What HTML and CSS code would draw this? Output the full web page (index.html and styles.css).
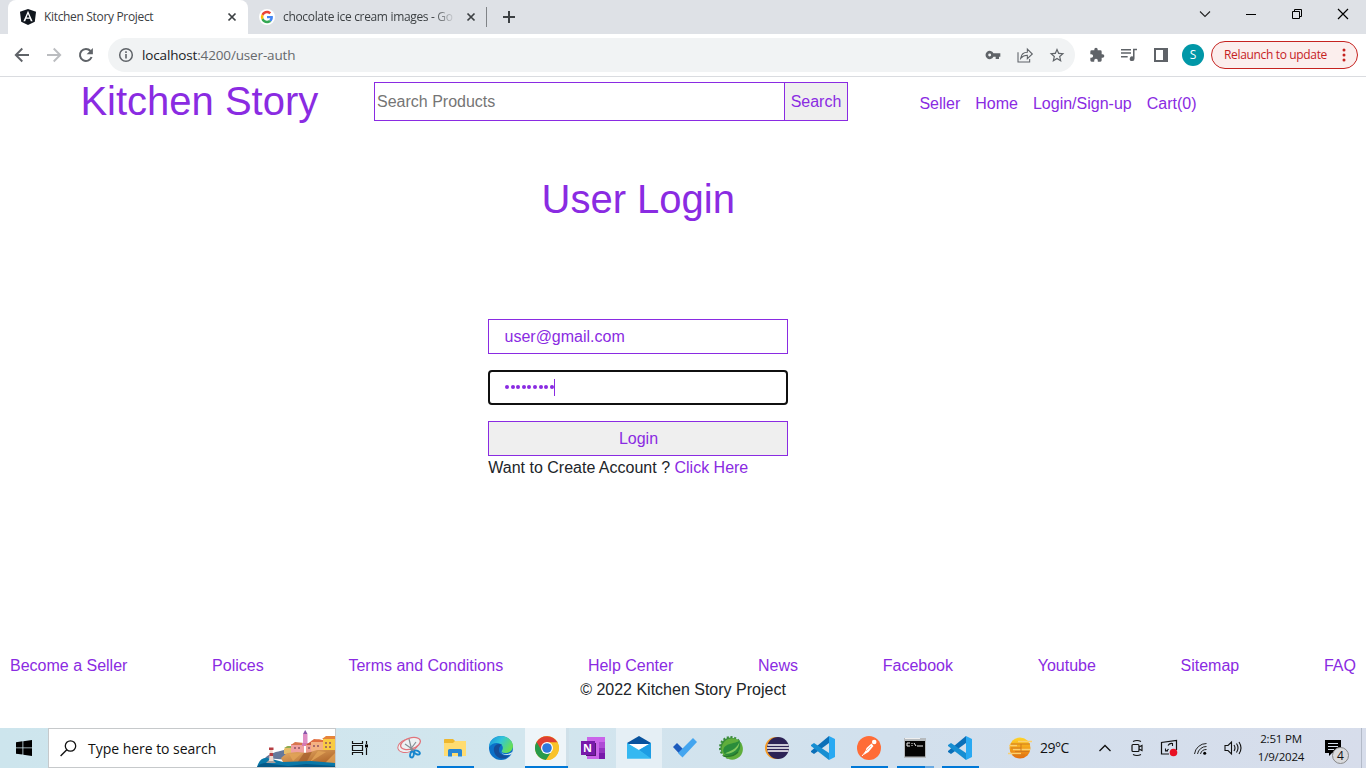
FILE: index.html
```html
<!DOCTYPE html>
<html lang="en">
<head>
<meta charset="utf-8">
<title>Kitchen Story Project</title>
<link rel="stylesheet" href="styles.css">
</head>
<body>
<div class="screen">
  <div class="tabstrip">
    <div class="tab tab-active">
      <svg class="favicon" width="16" height="16" viewBox="0 0 16 16"><path d="M8 0L16 2.700 14.800 12.700 8 16 1.200 12.700 0 2.700z" fill="#10161d"/><path d="M8 1.800L3.400 12.200h1.800l.9-2.400h3.800l.9 2.400h1.800zM8 5l1.400 3.400H6.600z" fill="#fff"/></svg>
      <span class="tab-title">Kitchen Story Project</span>
      <svg class="tab-close" width="16" height="16" viewBox="0 0 16 16"><path d="M4.500 4.500l7 7M11.500 4.500l-7 7" stroke="#3c4043" stroke-width="1.700"/></svg>
    </div>
    <div class="tab tab-idle">
      <svg class="favicon" width="16" height="16" viewBox="0 0 48 48"><circle cx="24" cy="24" r="24" fill="#fff"/><g transform="translate(5.500 5.500) scale(.77)"><path fill="#EA4335" d="M24 9.500c3.500 0 6.700 1.200 9.200 3.600l6.900-6.900C35.900 2.400 30.500 0 24 0 14.600 0 6.500 5.400 2.600 13.200l8 6.200C12.400 13.700 17.700 9.500 24 9.500z"/><path fill="#4285F4" d="M47 24.600c0-1.600-.2-3.100-.4-4.600H24v9h12.900c-.6 3-2.300 5.500-4.800 7.200l7.700 6C44.400 38 47 31.800 47 24.600z"/><path fill="#FBBC05" d="M10.500 28.600a14.500 14.500 0 010-9.200l-8-6.200a24 24 0 000 21.600z"/><path fill="#34A853" d="M24 48c6.500 0 11.900-2.100 15.900-5.800l-7.700-6c-2.200 1.500-4.900 2.300-8.200 2.300-6.300 0-11.600-4.200-13.500-9.900l-8 6.200C6.500 42.600 14.600 48 24 48z"/></g></svg>
      <span class="tab-title tab-title-fade">chocolate ice cream images - Go</span>
      <svg class="tab-close" width="16" height="16" viewBox="0 0 16 16"><path d="M4.500 4.500l7 7M11.500 4.500l-7 7" stroke="#3c4043" stroke-width="1.700"/></svg>
    </div>
    <span class="tab-divider"></span>
    <svg class="new-tab" width="28" height="28" viewBox="0 0 28 28"><path d="M14 8v12M8 14h12" stroke="#3c4043" stroke-width="2"/></svg>
    <div class="window-controls">
      <svg width="46" height="28" viewBox="0 0 46 28"><path d="M18 11.500l5 5 5-5" fill="none" stroke="#222" stroke-width="1.100"/></svg>
      <svg width="46" height="28" viewBox="0 0 46 28"><path d="M18 14.500h10" stroke="#000"/></svg>
      <svg width="46" height="28" viewBox="0 0 46 28"><path d="M18.500 11.500h7v7h-7zM20.500 11.500v-2h7v7h-2" fill="none" stroke="#000"/></svg>
      <svg width="46" height="28" viewBox="0 0 46 28"><path d="M18 9l10 10M28 9L18 19" stroke="#000" stroke-width="1.200"/></svg>
    </div>
  </div>

  <div class="toolbar">
    <div class="nav-buttons">
      <svg viewBox="0 0 16 16"><path d="M15 8H2M8.300 1.500L1.800 8l6.500 6.500" fill="none" stroke="#5f6368" stroke-width="1.900"/></svg>
      <svg viewBox="0 0 16 16"><path d="M1 8h13M7.700 1.500L14.200 8l-6.500 6.500" fill="none" stroke="#bbbdc0" stroke-width="1.900"/></svg>
      <svg viewBox="0 0 16 16"><path d="M13.600 10A6 6 0 1112.500 4" fill="none" stroke="#5f6368" stroke-width="2"/><path d="M14.900 1v6.300H8.600z" fill="#5f6368"/></svg>
    </div>
    <div class="omnibox">
      <svg class="info" width="16" height="16" viewBox="0 0 16 16"><circle cx="8" cy="8" r="6.300" fill="none" stroke="#5f6368" stroke-width="1.500"/><path d="M8 7v4.400M8 4.300v1.600" stroke="#5f6368" stroke-width="1.600"/></svg>
      <span class="url"><b>localhost</b>:4200/user-auth</span>
      <div class="omni-icons">
        <svg viewBox="0 0 24 24"><path d="M12.650 9.500a6.200 6.200 0 10 0 5H16V18h5v-3.500h2v-5zM7 14.200a2.200 2.200 0 110-4.400 2.200 2.200 0 010 4.400z" fill="#5f6368"/></svg>
        <svg viewBox="0 0 24 24"><path d="M1.500 8v14.500H19V18M5.500 17c1-6 4-9 10-9V3l7.500 7.500-7.500 7v-5c-4 0-7 1-10 4.500z" fill="none" stroke="#5f6368" stroke-width="1.600"/></svg>
        <svg viewBox="0 0 24 24"><path transform="translate(-1.200 -.7) scale(1.100)" d="M22 9.240l-7.190-.620L12 2 9.190 8.630 2 9.240l5.460 4.730L5.820 21 12 17.270 18.180 21l-1.630-7.030zM12 15.400l-3.760 2.270 1-4.280-3.320-2.880 4.380-.380L12 6.100l1.710 4.040 4.380.380-3.320 2.880 1 4.280z" fill="#5f6368"/></svg>
      </div>
    </div>
    <div class="extension-icons">
      <svg viewBox="0 0 24 24"><path d="M20.500 11H19V7a2 2 0 00-2-2h-4V3.500a2.500 2.500 0 00-5 0V5H4a2 2 0 00-2 2v3.800h1.500a2.700 2.700 0 010 5.400H2V20a2 2 0 002 2h3.800v-1.500a2.700 2.700 0 015.400 0V22H17a2 2 0 002-2v-4h1.500a2.500 2.500 0 000-5z" fill="#5f6368"/></svg>
      <svg viewBox="0 0 24 24"><path d="M0 4h15M0 9h15M0 14.500h10" stroke="#5f6368" stroke-width="2.300"/><path d="M24 2.500h-6v11.700a3.600 3.600 0 102.300 3.200V5H24z" fill="#5f6368"/></svg>
      <svg viewBox="0 0 16 16"><path d="M1 1h14v14H1zM3 3v10h7V3z" fill="#5f6368" fill-rule="evenodd"/></svg>
    </div>
    <span class="avatar">S</span>
    <div class="relaunch"><span>Relaunch to update</span><svg width="4" height="14" viewBox="0 0 4 14"><g fill="#c5221f"><circle cx="2" cy="2" r="1.500"/><circle cx="2" cy="7" r="1.500"/><circle cx="2" cy="12" r="1.500"/></g></svg></div>
  </div>

  <main class="page">
    <header class="site-header">
      <h1 class="brand">Kitchen Story</h1>
      <div class="search"><input class="search-input" type="text" placeholder="Search Products"><button class="search-button">Search</button></div>
      <nav class="site-nav"><a>Seller</a><a>Home</a><a>Login/Sign-up</a><a>Cart(0)</a></nav>
    </header>
    <section class="login">
      <h1 class="login-title">User Login</h1>
      <form class="login-form">
        <div class="field">user@gmail.com</div>
        <div class="field field-focus"><span class="dots"><i></i><i></i><i></i><i></i><i></i><i></i><i></i><i></i><i></i></span><span class="caret"></span></div>
        <button class="login-button" type="button">Login</button>
      </form>
      <p class="signup">Want to Create Account ? <a>Click Here</a></p>
    </section>
    <footer class="site-footer">
      <div class="footer-links"><a>Become a Seller</a><a>Polices</a><a>Terms and Conditions</a><a>Help Center</a><a>News</a><a>Facebook</a><a>Youtube</a><a>Sitemap</a><a>FAQ</a></div>
      <p class="copyright">© 2022 Kitchen Story Project</p>
    </footer>
  </main>

  <div class="taskbar">
    <div class="start"><svg width="16" height="16" viewBox="0 0 16 16"><path d="M0 2.200L6.500 1.300V7.500H0zM7.300 1.200L16 0v7.500H7.300zM0 8.300h6.500v6.300L0 13.700zM7.300 8.300H16V16l-8.700-1.200z"/></svg></div>
    <div class="task-search">
      <svg class="lens" width="17" height="17" viewBox="0 0 17 17"><circle cx="10.500" cy="6" r="5.200" fill="none" stroke="#111" stroke-width="1.300"/><path d="M6.800 9.800L.6 16" stroke="#111" stroke-width="1.400"/></svg>
      <span>Type here to search</span>
      <svg class="village" width="78" height="38" viewBox="0 0 78 38">
        <defs><linearGradient id="cliff" x2="1" y2="1"><stop stop-color="#e9b068"/><stop offset="1" stop-color="#a85c22"/></linearGradient></defs>
        <path d="M8 29c5-5 11-6 19-8l5 10z" fill="#65799b"/>
        <path d="M27 20l3-3h9v8H27z" fill="#e6bd68"/><path d="M27 19l4-2h7v2z" fill="#8cab52"/>
        <path d="M34 15h13v9H34z" fill="#efa0a0"/><path d="M34 16l4-3 9 1v2z" fill="#d8754d"/>
        <path d="M46 5h4.500v11H46z" fill="#df8fc5"/><path d="M46 5l2.200-4 2.300 4z" fill="#8854a8"/><path d="M45 14h7v3h-7z" fill="#d57ab2"/>
        <path d="M49 15h14v9H49z" fill="#ed9d94"/><path d="M49 16l4-3 10 1v2z" fill="#c85a3c"/>
        <path d="M54 12l8-2 5 2v10H54z" fill="#f4b183"/><path d="M53 13l4-3 9 1v2z" fill="#e06e42"/>
        <path d="M66 9h12v14H66z" fill="#f8cb42"/><path d="M65 10l4-3h9v3z" fill="#e6843a"/>
        <path d="M38 18v2m4-2v2m10-2v2m5-4v2m4-2v2m8-5v2m4-2v2m-4 2v2m4-2v2" stroke="#8e5364" stroke-width="1.500"/>
        <path d="M24 29l6-5 10-1 10 1 10-3 18 0v14H27z" fill="url(#cliff)"/><path d="M36 32l9-8-13 1zM53 33l8-11 8 1zM68 34l10-10v10z" fill="#e2a458" opacity=".8"/><path d="M47 24l-7 10h9l6-11z" fill="#a35b2b" opacity=".7"/>
        <path d="M0 38c2-7 6-10 11-9l15 4 28-1 24 2v4z" fill="#0a78a8"/><path d="M0 38c3-4 9-5 15-3l16 2 18-2 29 2v1z" fill="#055887"/>
        <path d="M9 34l3-3h4l3 3z" fill="#a9a09d"/><path d="M13 20h2.500l1 12h-4.500z" fill="#eed9cf"/><path d="M12.700 24h3.200l.3 3h-3.800zM12 18.500h4.500V21H12z" fill="#b63e43"/>
      </svg>
    </div>
    <div class="task-view"><svg width="18" height="18" viewBox="0 0 18 18"><path d="M1.500 2v2.500h10V2M1.500 16v-2.500h10V16M1.500 6.500h10v5h-10zM15.500 2v3M15.500 9v7" fill="none" stroke="#111" stroke-width="1.200"/><path d="M14 5.500h3v3h-3z"/></svg></div>
    <div class="apps">
      <div class="app"><svg viewBox="0 0 24 24"><g fill="#edf1f3" stroke="#e0747b"><ellipse cx="11" cy="9.500" rx="10.500" ry="6.500" transform="rotate(-19 11 9.500)"/><ellipse cx="13.500" cy="7.500" rx="10.200" ry="5.500" transform="rotate(-18 13.500 7.500)" stroke-width="1.300"/></g><path d="M12 3l3 12M8 8l10 7M19 6l-6 8" stroke="#858f94" stroke-width="1.200"/><g fill="none" stroke="#1686ce" stroke-width="1.900"><ellipse cx="15" cy="18.500" rx="1.800" ry="3" transform="rotate(12 15 18.500)"/><ellipse cx="20" cy="16.500" rx="3" ry="1.700" transform="rotate(25 20 16.500)"/></g></svg></div>
      <div class="app"><svg viewBox="0 0 24 24"><path d="M1 3.500Q1 3 2 3h8l2 2h9.500Q23 5 23 6v14H1z" fill="#eeb72e"/><path d="M1 7h9l2-2h11v15H1z" fill="#ffdc71"/><path d="M5 20.500v-6Q5 13 6.500 13h11q1.500 0 1.500 1.500v6h-4V17H9v3.500z" fill="#2786d4"/></svg><b class="run"></b></div>
      <div class="app"><svg viewBox="0 0 24 24"><defs><linearGradient id="edge" x1="0" y1="0" x2="1" y2=".5"><stop stop-color="#188be0"/><stop offset=".5" stop-color="#31c5d9"/><stop offset="1" stop-color="#67df55"/></linearGradient></defs><circle cx="12" cy="12" r="12" fill="#0b70c8"/><path d="M0 11C0 4.500 5.500 0 12 0c7 0 12 5 12 10 0 4.500-3.500 7-8 7-3 0-4-1.500-3-2.500 1.500-2 1-5-1.500-6.500C8 6 3 7 0 11z" fill="url(#edge)"/><path d="M13 8.500C8 6.500 4 10 5 15c1 6 7 9 12 7l4-3c-6 2-12-1-11-6 .200-2 1.500-3.500 3-4.500z" fill="#154d98"/><path d="M12 14.500c-.500 2.500 4 5.500 9.500 2.500l2.500-1.500-1.500 2.500c-5 2.500-11 0-10.500-3.500z" fill="#e0edf1"/></svg></div>
      <div class="app app-current"><svg viewBox="0 0 24 24"><circle cx="12" cy="12" r="12" fill="#f6bd17"/><path d="M12 12L1.600 6A12 12 0 0011 24l6-9z" fill="#289b4b"/><path d="M1.600 6A12 12 0 0122.500 6.500H12L7 15z" fill="#df3f33"/><path d="M12 6.500h10.500A12 12 0 0111 24l6-9z" fill="#f9c22b"/><circle cx="12" cy="12" r="6" fill="#fff"/><circle cx="12" cy="12" r="4.800" fill="#2d78dd"/></svg><b class="run run-wide"></b></div>
      <div class="app"><svg viewBox="0 0 24 24"><path d="M6 1h18v22H6z" fill="#ca64ea"/><path d="M18 6h6v6h-6z" fill="#ae4bd5"/><path d="M18 12h6v5h-6z" fill="#9332bf"/><path d="M18 17h6v6h-6z" fill="#7719aa"/><path d="M5 7h10v13H5z" fill="#541476"/><path d="M0 5h14v14H0z" fill="#7719aa"/></svg><span class="onenote-n">N</span></div>
      <div class="app app-hover"><svg viewBox="0 0 24 24"><path d="M0 7L12 0l12 7v15H0z" fill="#09539e"/><path d="M2 8h20v9H2z" fill="#fff"/><path d="M0 7l12 7 12-7v15.500H0z" fill="#42c1f2"/><path d="M0 22.500V7l24 15.500z" fill="#35b8f1"/><path d="M12 14l12-7v15.500z" fill="#1d9de4"/></svg></div>
      <div class="app"><svg viewBox="0 0 24 24"><path d="M0 11l4-4 8 8-4 4.500z" fill="#1c5bbd"/><path d="M5 17L20 2l4 4L9.500 21.500z" fill="#43a5ef"/></svg></div>
      <div class="app"><svg viewBox="0 0 24 24"><circle cx="11.500" cy="11.500" r="10" fill="#398b3b" stroke="#398b3b" stroke-width="3" stroke-dasharray="2 1.600"/><circle cx="13.200" cy="13" r="10.700" fill="#5fae3c"/><path d="M20.500 4C19 8 7 6 4.500 13c-1 3 1 6 5 7 9 1 14-7 11-16z" fill="#2a8c3b"/><path d="M20.500 6C17 14 11 15 6 17.500c7 1 14-3.500 14.500-11.500z" fill="#83c95c"/><path d="M5 20c5 1 10 0 14-4" stroke="#28752c" stroke-width="1.300" fill="none"/></svg></div>
      <div class="app"><svg viewBox="0 0 24 24"><circle cx="11" cy="12" r="11" fill="#f59a24"/><circle cx="13" cy="12" r="11" fill="#2c2255"/><path d="M2.500 9h21M2 12h22M2.500 15h21" stroke="#fff" stroke-width="1.600"/></svg></div>
      <div class="app"><svg viewBox="0 0 24 24"><path d="M18 0v7L3 18l-3-2v-1z" fill="#0b6fb8"/><path d="M0 9l3-2 15 10v7L0 10z" fill="#168ed2"/><path d="M18 0l6 3v18l-6 3z" fill="#29a9f2"/></svg></div>
      <div class="app"><svg viewBox="0 0 24 24"><circle cx="12" cy="12" r="12" fill="#ff6c37"/><circle cx="17.200" cy="6" r="2.300" fill="#fff"/><path d="M14.500 7.500l2 2.500-5 6-5 3 2-4 1-3z" fill="#fff"/><path d="M5 20l5-6 5-4" stroke="#fff" fill="none"/><path d="M9 15l5-5" stroke="#ff9a75" stroke-width=".7"/></svg><b class="run"></b></div>
      <div class="app app-narrow"><svg viewBox="0 0 24 24"><path d="M1 2h22v20H1z" fill="#b6babd"/><path d="M2 5h20v15.500H2z" fill="#050505"/><path d="M2 2h15v1H2z" fill="#eee"/><path d="M7 7H4v3h3M9 7v1m0 1v1m2-3l2 3m1 0h6" stroke="#eee" fill="none"/></svg><b class="run run-stack"></b></div>
      <div class="app"><svg viewBox="0 0 24 24"><path d="M18 0v7L3 18l-3-2v-1z" fill="#0b6fb8"/><path d="M0 9l3-2 15 10v7L0 10z" fill="#168ed2"/><path d="M18 0l6 3v18l-6 3z" fill="#29a9f2"/></svg><b class="run"></b></div>
    </div>
    <div class="tray">
      <svg class="weather" width="24" height="22" viewBox="0 0 24 22"><defs><linearGradient id="sun" x2="0" y2="1"><stop stop-color="#ffd52b"/><stop offset="1" stop-color="#e66d0c"/></linearGradient></defs><circle cx="12" cy="11" r="10.500" fill="url(#sun)"/><path d="M10 4.500h14M1 8.500h8M5 12.500h17M0 16.500h13" stroke="#fbd070" stroke-width="1.300"/><path d="M3 7h10v4H3M7 14.500h14M13 7h9M13 11v3M5 18h12" fill="none" stroke="#d27a1c"/></svg>
      <span class="temp">29°C</span>
      <svg class="tray-up" width="12" height="8" viewBox="0 0 12 8"><path d="M.5 7L6 1.500 11.500 7" fill="none" stroke="#111" stroke-width="1.300"/></svg>
      <div class="tray-icons">
        <svg viewBox="0 0 18 18"><rect x="4" y="5.500" width="7" height="7" rx="1" fill="none" stroke="#111" stroke-width="1.200"/><path d="M11 8l3-1.500v5L11 10M5 2.500q4-2 8 0M5 15.500q4 2 8 0" fill="none" stroke="#111" stroke-width="1.100"/></svg>
        <svg viewBox="0 0 18 18"><path d="M9 15H1.500V3.500l15-2V11" fill="none" stroke="#111" stroke-width="1.200"/><path d="M5.500 9.500V12H8M5.500 12q2 0 3-2M12.500 7V4.500H10M12.500 4.500q-3-.5-4.500 2" fill="none" stroke="#111" stroke-width="1.100"/><circle cx="13.500" cy="13.500" r="3.800" fill="#e81123"/></svg>
        <svg viewBox="0 0 18 18"><path d="M2.500 15A12 12 0 0114.500 4.500M5.500 15a9 9 0 019-7.500M8.500 15a6 6 0 016-4.500" fill="none" stroke="#222"/><circle cx="12.700" cy="14.200" r="1.500"/></svg>
        <svg viewBox="0 0 18 18"><path d="M1 6.500h3L7.500 3v12L4 11.500H1zM10 6q2 3 0 6M12.500 4.500q3 4.500 0 9M15 3q4 6 0 12" fill="none" stroke="#111" stroke-width="1.100"/></svg>
      </div>
      <div class="clock"><span>2:51 PM</span><span>1/9/2024</span></div>
      <div class="notice"><svg width="16" height="16" viewBox="0 0 16 16"><path d="M0 0h16v13H7l-3 3v-3H0z"/><path d="M3 3.500h10M3 6.500h10M3 9.500h6" stroke="#d5deeb" stroke-width="1"/></svg><span class="notice-count">4</span></div>
      <span class="desktop-edge"></span>
    </div>
  </div>
</div>
</body>
</html>
```
FILE: styles.css
```css
* { box-sizing: border-box; }
body { margin: 0; overflow: hidden; background: #fff; font-family: "Liberation Sans", Arial, sans-serif; font-size: 16px; line-height: 24px; color: #212529; }
svg { display: block; flex: none; }
h1, p { margin: 0; font-weight: 400; }
.screen { width: 1366px; height: 768px; display: flex; flex-direction: column; }

.tabstrip { height: 34px; flex: none; display: flex; background: #dee1e6; padding-left: 8px; font: 12px/16px "Open Sans", sans-serif; color: #3c4043; }
.tab { display: flex; align-items: center; height: 34px; white-space: nowrap; }
.tab-active { width: 240px; background: #fff; border-radius: 8px 8px 0 0; padding: 0 8px 0 12px; }
.tab-idle { width: 238px; padding: 0 7px 0 11px; }
.favicon { margin-right: 8px; }
.tab-title { flex: 1; font-size: 12px; letter-spacing: -.33px; }
.tab-title-fade { -webkit-mask-image: linear-gradient(90deg, #000 150px, transparent 173px); mask-image: linear-gradient(90deg, #000 150px, transparent 173px); }
.tab-close { margin-left: 8px; }
.tab-divider { width: 1px; height: 20px; margin-top: 7px; background: #808387; }
.new-tab { margin: 3px 0 0 8px; }
.window-controls { display: flex; margin-left: auto; }

.toolbar { height: 43px; flex: none; display: flex; align-items: center; background: #fff; border-bottom: 1px solid #dadce0; padding: 0 8px; font-family: "Open Sans", sans-serif; }
.nav-buttons { display: flex; gap: 16px; margin: 0 14px 0 6px; }
.nav-buttons svg, .omni-icons svg, .extension-icons svg { width: 16px; height: 16px; overflow: visible; }
.omnibox { width: 967px; height: 34px; display: flex; align-items: center; background: #f1f3f4; border-radius: 17px; padding: 0 10px; }
.url { margin-left: 8px; font-size: 13.5px; letter-spacing: -.15px; color: #66696d; }
.url b { font-weight: 400; color: #202124; }
.omni-icons { display: flex; gap: 16px; margin-left: auto; }
.extension-icons { display: flex; gap: 16px; margin-left: 14px; }
.avatar { width: 22px; height: 22px; margin: 0 7px 0 13px; border-radius: 50%; background: #0097a7; color: #fff; font-size: 12px; line-height: 22px; text-align: center; }
.relaunch { width: 147px; height: 28px; display: flex; align-items: center; justify-content: space-between; border: 1px solid #c5221f; border-radius: 14px; background: #fbeeed; color: #c5221f; padding: 0 11px 0 12px; font-size: 12px; letter-spacing: -.34px; white-space: nowrap; }

.page { flex: 1; display: flex; flex-direction: column; }
.page a, .brand, .login-title { color: #8a2be2; }
.site-header { display: flex; padding: 5px 0 0 80.4px; }
.brand { width: 293.6px; font-size: 40px; line-height: 39px; }
.search { display: flex; width: 474px; height: 39px; }
.search-input { width: 411px; border: 1px solid #8a2be2; padding: 1px 2px; font: 16px "Liberation Sans", sans-serif; border-radius: 0; }
.search-input::placeholder { color: #757575; }
.search-button { width: 64px; margin-left: -1px; padding: 0; border: 1px solid #8a2be2; background: #efefef; color: #8a2be2; font: 16px "Liberation Sans", sans-serif; }
.site-nav { display: flex; gap: 15px; margin: 10px 0 0 71.4px; }
.login { width: 300px; margin: 54px 0 0 488px; }
.login-title { height: 48px; line-height: 48px; font-size: 40px; text-align: center; padding-left: .5px; }
.login-form { display: flex; flex-direction: column; gap: 16px; margin-top: 96px; }
.field, .login-button { height: 35px; border: 1px solid #8a2be2; color: #8a2be2; font: 16px/33px "Liberation Sans", sans-serif; }
.field { padding: 0 15px 0 15.5px; }
.field-focus { display: flex; align-items: center; border: 2px solid #101010; border-radius: 4px; padding-left: 15px; }
.dots { display: flex; gap: 1.6px; padding-bottom: 1.5px; }
.dots i { width: 4px; height: 4px; border-radius: 50%; background: #8a2be2; }
.caret { width: 1px; height: 17px; background: #8a2be2; }
.login-button { background: #efefef; padding: 0 0 0 1px; }
.signup { white-space: nowrap; padding-left: .3px; }
.site-footer { margin-top: auto; padding: 0 10px 26px; }
.footer-links { display: flex; justify-content: space-between; }
.copyright { text-align: center; }

.taskbar { height: 40px; flex: none; display: flex; background: linear-gradient(90deg, #cde5ed, #d2e6ee 38%, #d2e0ed 65%, #d7ddeb); color: #111; font-family: "Open Sans", sans-serif; }
.start { width: 48px; display: grid; place-items: center; }
.task-search { width: 288px; display: flex; align-items: center; border: 1px solid #c6c9cb; background: #fff; padding-left: 11px; font-size: 14px; white-space: nowrap; }
.task-search span { margin: 1px 0 0 11px; font-size: 14px; letter-spacing: -.03px; }
.village { margin-left: auto; }
.task-view { width: 50px; display: flex; align-items: center; padding-left: 15px; }
.apps { display: flex; }
.app { width: 46px; height: 40px; display: grid; place-items: center; position: relative; }
.app svg { width: 24px; height: 24px; }
.app-current::before { content: ""; position: absolute; inset: 0 1px 0 1px; background: #eef5f9; border-right: 3px solid #cfe0e9; z-index: 0; }
.app-current svg { position: relative; }
.app-hover { background: #e5eff5; }
.app-narrow { width: 45px; }
.run { position: absolute; left: 5px; bottom: 0; width: 37px; height: 2px; background: #0078d7; }
.run-wide { left: 1px; width: 43px; }
.run-stack { background: linear-gradient(90deg, #0078d7 28px, #68a9e2 28px); }
.onenote-n { position: absolute; left: 13px; top: 12px; color: #fff; font: bold 11px/16px "Open Sans", sans-serif; }
.tray { flex: 1; display: flex; align-items: center; padding-left: 25px; }
.temp { width: 58px; margin-left: 8px; font-size: 14px; letter-spacing: -.5px; }
.tray-up { margin-left: 1px; }
.tray-icons { display: flex; gap: 14px; margin-left: 17px; }
.tray-icons svg { width: 18px; height: 18px; }
.clock { width: 62px; margin-left: 8px; display: flex; flex-direction: column; align-items: center; font-size: 11.5px; line-height: 18px; letter-spacing: -.2px; }
.notice { position: relative; margin-left: 13px; }
.notice-count { position: absolute; left: 7px; top: 7px; width: 17px; height: 17px; border: 1px solid #888; border-radius: 50%; background: #d9dadd; font-size: 12px; line-height: 15px; text-align: center; }
.desktop-edge { width: 1px; height: 40px; margin: 0 4px 0 auto; background: #b3bac8; }
```
